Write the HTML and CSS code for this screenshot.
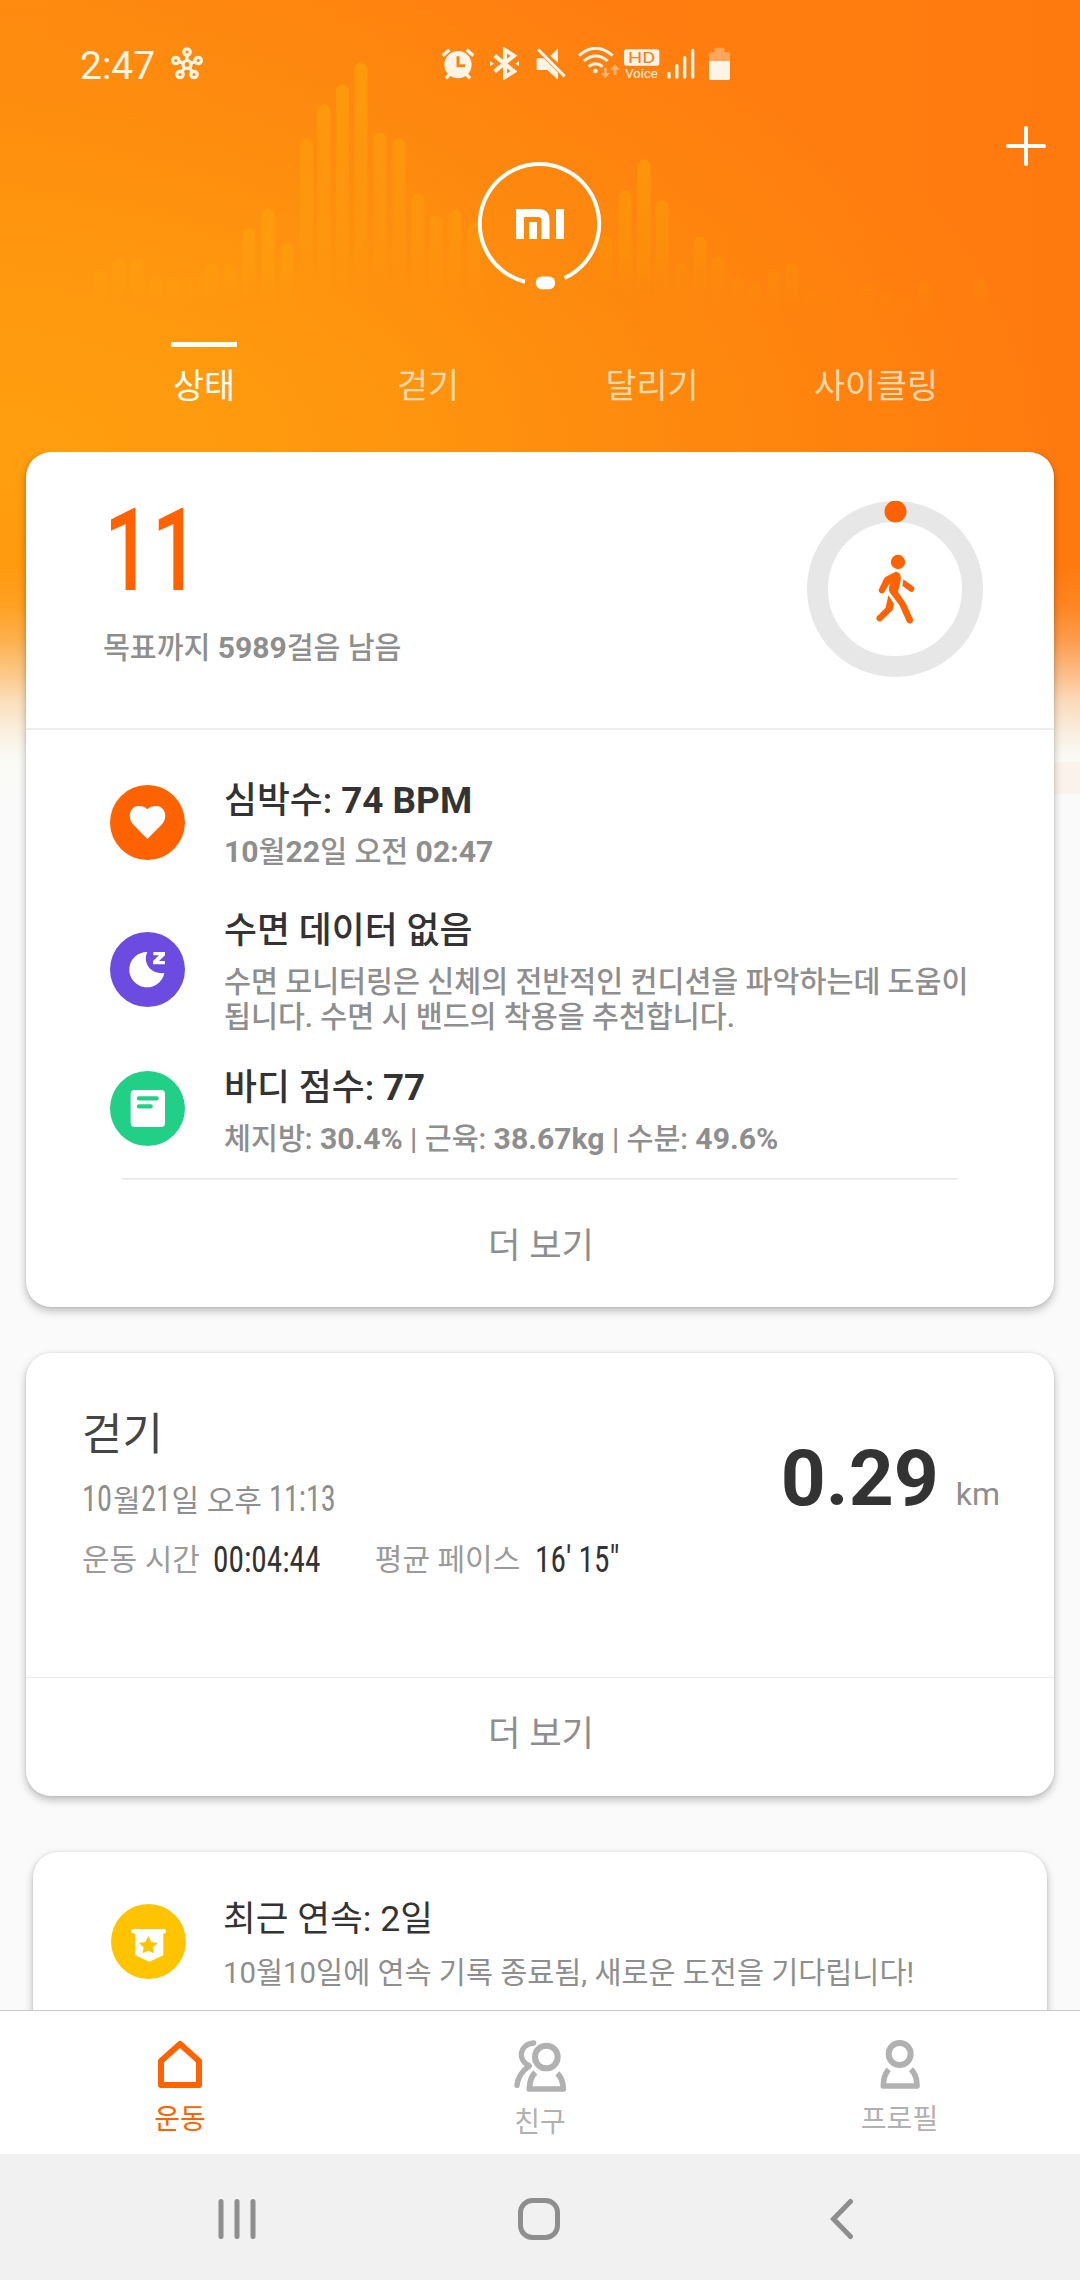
FILE: index.html
```html
<!DOCTYPE html>
<html lang="ko">
<head>
<meta charset="utf-8">
<title>Mi Fit</title>
<link rel="stylesheet" href="styles.css">
</head>
<body>
<div class="screen">
  <svg class="equalizer" width="1080" height="320" viewBox="0 0 1080 320" aria-hidden="true">
    <defs>
      <linearGradient id="low" gradientUnits="userSpaceOnUse" x1="0" y1="225" x2="0" y2="305">
        <stop offset="0" stop-color="#ffa20c" stop-opacity=".6"/>
        <stop offset=".5" stop-color="#ffa20c" stop-opacity=".4"/>
        <stop offset="1" stop-color="#ffa010" stop-opacity="0"/>
      </linearGradient>
      <linearGradient id="tall" gradientUnits="userSpaceOnUse" x1="0" y1="60" x2="0" y2="300">
        <stop offset="0" stop-color="#ff9e0a" stop-opacity=".85"/>
        <stop offset=".5" stop-color="#ff9a0e" stop-opacity=".65"/>
        <stop offset=".75" stop-color="#ff9a0e" stop-opacity=".5"/>
        <stop offset="1" stop-color="#ff9810" stop-opacity="0"/>
      </linearGradient>
      <linearGradient id="mid" gradientUnits="userSpaceOnUse" x1="0" y1="160" x2="0" y2="315">
        <stop offset="0" stop-color="#fd980a" stop-opacity=".9"/>
        <stop offset=".6" stop-color="#fd900a" stop-opacity=".75"/>
        <stop offset="1" stop-color="#fb880a" stop-opacity="0"/>
      </linearGradient>
    </defs>
    <path stroke="url(#low)" stroke-width="13" stroke-linecap="round" d="M100 300V277M119 300V264M137 300V264M156 300V284M174 300V284M193 300V284M211 300V270M230 300V270M249 300V235M268 300V215M287 300V250"/>
    <path stroke="url(#tall)" stroke-width="13" stroke-linecap="round" d="M306.500 300V145M324 300V111M342.500 300V91M361 300V69M380 300V139M399 300V145M418 300V200M436 300V222M455 300V216M474 300V229"/>
    <path stroke="url(#mid)" stroke-width="13" stroke-linecap="round" d="M493 312V271M512 312V290M530 312V296M568 312V290M587 312V290M606 312V243M625 312V197M644 312V166M662 312V207M681 312V270M700 312V243M718 312V263M737 312V283M755 312V290M774 312V277M792 312V270M811 312V296M830 312V301M849 312V304M868 312V291M887 312V297M906 312V304M925 312V289M981 300V286"/>
  </svg>

  <header class="status-bar">
    <span class="clock">2:47</span>
    <svg class="ico-hub" width="32" height="33" viewBox="0 0 32 33" fill="none" stroke="#fff4e6" stroke-width="3.200">
      <circle cx="16" cy="17.500" r="4"/><circle cx="16" cy="5" r="3.200"/><circle cx="4.800" cy="13.500" r="3.200"/><circle cx="27.200" cy="13.500" r="3.200"/><circle cx="9" cy="27.500" r="3.200"/><circle cx="23" cy="27.500" r="3.200"/>
      <path d="M16 8v5M7.500 14.500l4 1.500M24.500 14.500l-4 1.500M10.800 24.800l2.600-3.600M21.200 24.800l-2.600-3.600"/>
    </svg>
    <svg class="ico-alarm" width="32" height="33" viewBox="36 20 96 99">
      <circle cx="84" cy="73" r="41" fill="#fff4e6"/>
      <path d="M38 46L58 28M130 46L110 28M48 114L60 101M120 114L108 101" stroke="#fff4e6" stroke-width="10"/>
      <path d="M84 48V76H105" fill="none" stroke="#ff8210" stroke-width="9"/>
    </svg>
    <svg class="ico-bt" width="29" height="33" viewBox="180 20 87 99" fill="none" stroke="#fff4e6" stroke-width="12">
      <path d="M194 46L252 93L225 110V29L252 46L194 93"/>
      <path d="M180 63l12 7-12 7zM267 63l-12 7 12 7z" fill="#fff4e6" stroke="none"/>
    </svg>
    <svg class="ico-mute" width="30" height="33" viewBox="318 20 90 99">
      <path fill="#fff4e6" d="M320 54H341L384 97V118L352 89H320zM361 47L384 24V67z"/>
      <path stroke="#fff4e6" stroke-width="9" d="M324 27L404 108"/>
    </svg>
    <svg class="ico-wifi" width="42" height="33" viewBox="443 20 126 99" fill="none" stroke="#fff4e6" stroke-width="8.500">
      <path d="M446 46Q496 1 547 46M461 62Q496 32 532 62M475 79Q496 61 517 79"/>
      <circle cx="495" cy="92" r="7" fill="#fff4e6" stroke="none"/>
      <path stroke="#ffb26e" d="M525 82V108M554 78V104"/>
      <path fill="#ffb26e" stroke="none" d="M511 98h28l-14 16zM540 88h28l-14-16z"/>
    </svg>
    <svg class="ico-hd" width="36" height="33" viewBox="582 20 108 99">
      <rect x="582" y="27" width="106" height="49" rx="8" fill="#fff4e6"/>
      <text class="hd-text" x="594" y="68" textLength="82" lengthAdjust="spacingAndGlyphs">HD</text>
      <text class="voice-text" x="586" y="112" textLength="97" lengthAdjust="spacingAndGlyphs">Voice</text>
    </svg>
    <svg class="ico-signal" width="28" height="33" viewBox="710 20 84 99" stroke="#fff4e6" stroke-width="10" stroke-linecap="round">
      <path d="M716 99V110M739.500 76V110M763 52V110M787 30V110"/>
    </svg>
    <svg class="ico-battery" width="21" height="33" viewBox="834 20 63 99">
      <path fill="#ffa65c" d="M851 22h29v14h13q4 0 4 5v25h-63V41q0-5 4-5h13z"/>
      <path fill="#fff4e6" d="M834 62h63v52q0 5-5 5h-53q-5 0-5-5z"/>
    </svg>
  </header>

  <div class="toolbar">
    <svg class="mi-logo" width="128" height="132" viewBox="476 160 128 132" fill="none" stroke="#fff">
      <path stroke-width="4" d="M525 281.700A59.700 59.700 0 1 1 564.500 278"/>
      <rect x="535.700" y="276.500" width="19.500" height="12.800" rx="6.400" fill="#fff" stroke="none"/>
      <path stroke-width="8" d="M520 239V213H538Q545.500 213 545.500 220V239M533 222V239M560 209V239"/>
    </svg>
    <svg class="plus" width="40" height="40" viewBox="0 0 40 40" stroke="#fff" stroke-width="4" stroke-linecap="round"><path d="M20 2V38M2 20H38"/></svg>
  </div>

  <nav class="tabs">
    <span class="tab tab-active">상태</span>
    <span class="tab">걷기</span>
    <span class="tab">달리기</span>
    <span class="tab">사이클링</span>
  </nav>

  <main class="feed">
    <section class="card">
      <div class="summary">
        <div>
          <div class="steps">11</div>
          <div class="goal">목표까지 <b>5989</b>걸음 남음</div>
        </div>
        <svg class="ring" width="176" height="176" viewBox="21 33 528 528">
          <circle cx="285" cy="297" r="232.500" fill="none" stroke="#e7e7e7" stroke-width="63"/>
          <circle cx="286.500" cy="64.500" r="33" fill="#ff6200"/>
          <g fill="#ff6200">
            <circle cx="294" cy="216" r="21.500"/>
            <path d="M287 245Q306 247 302 272L294 306L317 339L339 388A10 10 0 0 1 321 396L298 345L270 308Q265 302 267 294L271 276L252 308A10 10 0 0 1 236 299L253 265Q256 260 262 258z"/>
            <path d="M310 268L339 289A9 9 0 0 1 329 304L307 287zM265 316L282 341L278 360L244 393A10 10 0 0 1 230 380L257 353z"/>
          </g>
        </svg>
      </div>
      <div class="metrics">
        <div class="metric metric-heart">
          <svg class="badge" width="75" height="75" viewBox="0 0 225 225"><circle cx="112.500" cy="112.500" r="112.500" fill="#ff6200"/><path fill="#fff" d="M112 162L69 118C50 94 62 63 86 63Q102 63 112 73Q122 63 139 63C163 63 176 94 156 118z"/></svg>
          <div class="metric-text">
            <div class="title">심박수: <b>74 BPM</b></div>
            <div class="sub"><b>10</b>월<b>22</b>일 오전 <b>02:47</b></div>
          </div>
        </div>
        <div class="metric metric-sleep">
          <svg class="badge" width="75" height="75" viewBox="0 0 225 225"><circle cx="112.500" cy="112.500" r="112.500" fill="#6b4be0"/><path fill="#fff" d="M112 60C98 88 118 128 163 123A53 53 0 1 1 112 60zM130 60H165V70L147 87H165V97H129V87L147 70H130z"/></svg>
          <div class="metric-text">
            <div class="title">수면 데이터 없음</div>
            <div class="sub">수면 모니터링은 신체의 전반적인 컨디션을 파악하는데 도움이<br>됩니다. 수면 시 밴드의 착용을 추천합니다.</div>
          </div>
        </div>
        <div class="metric metric-body">
          <svg class="badge" width="75" height="75" viewBox="0 0 225 225"><circle cx="112.500" cy="112.500" r="112.500" fill="#22cf86"/><rect x="62" y="57" width="103" height="111" rx="12" fill="#fff"/><path stroke="#22cf86" stroke-width="13" stroke-linecap="round" d="M87 82H140M87 106H122"/></svg>
          <div class="metric-text">
            <div class="title">바디 점수: <b>77</b></div>
            <div class="sub">체지방: <b>30.4%</b> | 근육: <b>38.67kg</b> | 수분: <b>49.6%</b></div>
          </div>
        </div>
      </div>
      <a class="more more-inset">더 보기</a>
    </section>

    <section class="card activity">
      <div class="activity-body">
        <div>
          <div class="activity-name">걷기</div>
          <div class="activity-date"><span class="narrow w-10">10</span>월<span class="narrow w-21">21</span>일 오후 <span class="narrow w-time">11:13</span></div>
          <div class="activity-stats">
            <span class="label">운동 시간</span><span class="narrow value w-duration">00:04:44</span>
            <span class="label label-pace">평균 페이스</span><span class="narrow value w-pace">16′ 15″</span>
          </div>
        </div>
        <div class="distance"><span class="distance-value">0.29</span><span class="distance-unit">km</span></div>
      </div>
      <a class="more more-full">더 보기</a>
    </section>

    <section class="card streak">
      <svg class="badge" width="75" height="75" viewBox="0 0 225 225"><circle cx="112.500" cy="112.500" r="112.500" fill="#ffc400"/><path fill="#fff" d="M67 75H159Q165 75 165 82Q165 89 157 89V154L115 173L73 154V89Q61 89 61 82Q61 75 67 75z"/><path fill="#ffc400" d="M112 97L121 114L140 117L126 130L129 148L112 140L95 148L98 130L84 117L103 114z"/></svg>
      <div class="metric-text">
        <div class="title">최근 연속: 2일</div>
        <div class="sub">10월10일에 연속 기록 종료됨, 새로운 도전을 기다립니다!</div>
      </div>
    </section>
  </main>

  <nav class="bottom-nav">
    <a class="nav-item nav-active">
      <svg width="44" height="49" viewBox="0 0 44 49" fill="none" stroke="currentColor" stroke-width="6" stroke-linejoin="round"><path d="M22 4L41 21V45H3V21z"/></svg>
      <span>운동</span>
    </a>
    <a class="nav-item">
      <svg width="53" height="52" viewBox="101 180 159 156" fill="none" stroke="currentColor" stroke-width="18" stroke-linejoin="round"><circle cx="198" cy="231" r="34"/><path stroke-width="17" d="M165 277Q148 293 147 327H249Q248 296 231 280"/><path stroke-width="16" stroke-linecap="round" d="M160 189C118 192 109 240 147 258Q114 280 110 316"/></svg>
      <span>친구</span>
    </a>
    <a class="nav-item nav-profile">
      <svg width="40" height="49" viewBox="1198 180 120 147" fill="none" stroke="currentColor" stroke-width="18" stroke-linejoin="round"><circle cx="1257" cy="222" r="33"/><path stroke-width="17" d="M1224 268Q1208 286 1208 318H1309Q1309 286 1291 268"/></svg>
      <span>프로필</span>
    </a>
  </nav>
  <div class="system-nav">
    <svg width="38" height="42" viewBox="0 0 38 42" stroke="#8e8e8e" stroke-width="5" stroke-linecap="round"><path d="M3 3.500V38.500M19 3.500V38.500M35 3.500V38.500"/></svg>
    <svg class="sys-home" width="42" height="42" viewBox="0 0 42 42" fill="none" stroke="#8e8e8e" stroke-width="5"><rect x="2.500" y="2.500" width="37" height="37" rx="12"/></svg>
    <svg class="sys-back" width="24" height="42" viewBox="0 0 24 42" fill="none" stroke="#8e8e8e" stroke-width="5" stroke-linecap="round"><path d="M20.500 3.500L3.500 21L20.500 38.500"/></svg>
  </div>
</div>
</body>
</html>
```
FILE: styles.css
```css
* { box-sizing: border-box; }

body {
  margin: 0;
  font-family: Roboto, "Noto Sans CJK KR", sans-serif;
  color: #333;
}

svg { display: block; flex: none; }

.screen {
  position: relative;
  display: flex;
  flex-direction: column;
  width: 1080px;
  height: 2280px;
  overflow: hidden;
  background:
    linear-gradient(#fbf2ec, #fbf2ec) right 0 top 762px / 60px 32px no-repeat,
    linear-gradient(to bottom, rgba(250, 235, 220, 0) 565px, rgba(250, 235, 220, .1) 607px, rgba(250, 235, 220, .3) 640px, rgba(250, 235, 220, .56) 670px, rgba(250, 238, 222, .82) 700px, rgba(250, 244, 234, .94) 730px, #fafaf5 757px, #fafafa 800px),
    radial-gradient(ellipse 1050px 540px at 0 450px, #ff9f0e 0, rgba(255, 154, 14, .85) 35%, rgba(252, 146, 12, .55) 65%, rgba(252, 138, 12, 0) 100%),
    linear-gradient(90deg, #ff8810 0, #ff7e10 50%, #ff7a0e 100%);
}

.equalizer { position: absolute; left: 0; top: 0; }

.status-bar {
  position: relative;
  display: flex;
  height: 100px;
  padding: 47px 0 0 80px;
}

.clock {
  width: 91px;
  font-size: 39px;
  line-height: 38px;
  color: #fff4e6;
}

.ico-alarm { margin-left: 239px; }
.ico-bt { margin-left: 16px; }
.ico-mute { margin-left: 17px; }
.ico-wifi { margin-left: 12px; }
.ico-hd { margin-left: 4px; }
.ico-signal { margin-left: 7px; }
.ico-battery { margin-left: 14px; }
.hd-text { font-size: 46px; fill: #ff7c10; }
.voice-text { font-size: 38px; fill: #fff4e6; }

.toolbar {
  position: relative;
  display: grid;
  grid-template-columns: 1fr 128px 1fr;
  height: 242px;
}

.mi-logo { grid-column: 2; margin-top: 60px; }
.plus { grid-column: 3; justify-self: end; margin: 26px 34px 0 0; }

.tabs {
  position: relative;
  display: grid;
  grid-template-columns: repeat(4, 224px);
  justify-content: center;
  height: 110px;
}

.tab {
  display: flex;
  flex-direction: column;
  align-items: center;
  padding-top: 25px;
  font-size: 33.7px;
  line-height: 40px;
  color: #ffd9ab;
}

.tab-active { padding-top: 0; color: #fff; }

.tab-active::before {
  content: "";
  width: 66px;
  height: 5px;
  margin-bottom: 20px;
  background: #fff;
}

.feed {
  position: relative;
  display: flex;
  flex-direction: column;
  height: 1558px;
  padding: 0 26px;
  overflow: hidden;
}

.card {
  flex: none;
  border-radius: 25px;
  background: #fff;
  box-shadow: 0 4px 9px rgba(0, 0, 0, .25), 0 0 3px rgba(0, 0, 0, .1);
}

.summary {
  display: flex;
  justify-content: space-between;
  height: 278px;
  padding: 0 71px 0 77px;
  border-bottom: 2px solid #ededed;
}

.steps {
  margin: 58px 0 0 1px;
  font-size: 115px;
  font-weight: 500;
  line-height: 82px;
  color: #ff6200;
  transform: scaleX(.73);
  transform-origin: left;
}

.goal {
  margin-top: 38px;
  font-size: 29.2px;
  font-weight: 500;
  line-height: 36px;
  color: #8e8e8e;
}

b { font-size: 1.03em; line-height: 1; }

.ring { margin-top: 49px; }

.metrics {
  display: flex;
  flex-direction: column;
  padding: 51px 60px 0 84px;
}

.metric { display: flex; gap: 39px; }
.metric-heart .badge { margin-top: 4px; }
.metric-sleep { margin-top: 41px; }
.metric-sleep .badge { margin-top: 21px; }
.metric-body { margin-top: 33px; }
.metric-body .badge { margin-top: 3px; }

.title {
  height: 40px;
  margin-bottom: 14px;
  font-size: 35.8px;
  font-weight: 500;
  line-height: 40px;
  white-space: nowrap;
}

.sub {
  font-size: 29.3px;
  font-weight: 500;
  line-height: 35px;
  color: #8e8e8e;
  white-space: nowrap;
}

.more {
  display: flex;
  align-items: center;
  justify-content: center;
  padding-left: 2px;
  font-size: 35.3px;
  color: #8e8e8e;
}

.more-inset {
  height: 129px;
  margin: 21px 96px 0;
  padding-bottom: 2px;
  border-top: 2px solid #ededed;
}

.activity {
  margin-top: 46px;
}

.activity-body {
  display: flex;
  justify-content: space-between;
  height: 324px;
  padding: 0 54px 0 56px;
}

.activity-name {
  margin-top: 57px;
  font-size: 44px;
  line-height: 50px;
  color: #444;
}

.activity-date {
  margin-top: 19px;
  font-size: 30px;
  line-height: 40px;
  color: #8e8e8e;
  white-space: nowrap;
}

.activity-date .narrow { transform: scaleX(.84); }

.activity-stats {
  display: flex;
  margin-top: 19px;
  font-size: 30px;
  line-height: 40px;
}

.label { color: #9a9a9a; }
.label-pace { margin-left: 55px; }

/* condensed numerals */
.narrow {
  display: inline-block;
  font-size: 36px;
  font-stretch: 75%;
  line-height: 40px;
  white-space: nowrap;
  transform: scaleX(.87);
  transform-origin: left;
}

.value { margin-left: 13px; color: #333; }
.label-pace + .value { margin-left: 15px; }
.w-10, .w-21 { width: 31px; }
.w-time { width: 68px; }
.w-duration { width: 107px; }
.w-pace { width: 84px; }

.distance {
  display: flex;
  align-items: baseline;
  height: 92px;
  margin-top: 79px;
}

.distance-value { font-size: 78.5px; font-weight: 700; line-height: 92px; }
.distance-unit { margin-left: 17px; font-size: 32px; color: #8e8e8e; }

.more-full { height: 119px; padding-bottom: 13px; border-top: 1px solid #ededed; }

.streak {
  display: flex;
  gap: 37px;
  height: 300px;
  margin: 56px 7px 0;
  padding: 47px 0 0 78px;
}

.streak .badge { margin-top: 5px; }
.streak .title { margin-bottom: 17px; font-size: 35.6px; font-weight: 400; }
.streak .sub { font-size: 29.4px; font-weight: 400; }

.bottom-nav {
  position: relative;
  display: grid;
  grid-template-columns: repeat(3, 360px);
  height: 144px;
  border-top: 1px solid #c8c8c8;
  background: #fff;
}

.nav-item {
  display: flex;
  flex-direction: column;
  align-items: center;
  gap: 14px;
  padding-top: 29px;
  font-size: 28px;
  line-height: 34px;
  color: #b1b1b1;
}

.nav-active { color: #ff6200; }
.nav-profile { padding-right: 1px; }

.system-nav {
  display: flex;
  align-items: center;
  height: 126px;
  padding: 4px 0 0 218px;
  background: #f1f1f1;
}

.sys-home { margin-left: 262px; }
.sys-back { margin-left: 270px; }
```
